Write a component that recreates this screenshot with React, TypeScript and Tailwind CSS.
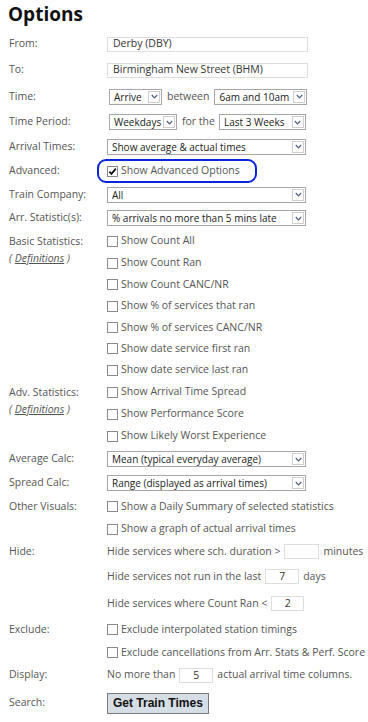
import React from "react";

type RowProps = {
  h: string;
  label?: React.ReactNode;
  children?: React.ReactNode;
};

const Row = ({ h, label, children }: RowProps) => (
  <div className={`flex items-center ${h}`}>
    <div className="w-[107px] shrink-0 pl-[9px] text-[#555]">{label}</div>
    <div className="flex flex-1 items-center">{children}</div>
  </div>
);

const Chevron = () => (
  <svg width="7" height="5" viewBox="0 0 7 5">
    <path d="M0.8 1 L3.5 3.8 L6.2 1" fill="none" stroke="#4d5f7a" strokeWidth="1.2" />
  </svg>
);

const Select = ({ value, w }: { value: string; w: string }) => (
  <div
    className={`relative flex h-[16px] shrink-0 items-center border border-[#a7a7a7] bg-white pl-[4px] text-[10px] text-[#222] ${w}`}
  >
    <span className="whitespace-nowrap leading-none">{value}</span>
    <div className="absolute right-[1px] top-[1px] flex h-[12px] w-[12px] items-center justify-center border border-[#cfcfcf] bg-white">
      <Chevron />
    </div>
  </div>
);

const TextBox = ({ value, w }: { value?: string; w: string }) => (
  <div
    className={`flex h-[15px] shrink-0 items-center justify-center border border-[#dedede] bg-white text-[#333] ${w}`}
  >
    <span className="leading-none">{value}</span>
  </div>
);

const Check = ({ label, checked = false }: { label: string; checked?: boolean }) => (
  <div className="flex items-center">
    <span className="relative mr-[3px] flex h-[11px] w-[11px] shrink-0 items-center justify-center border border-[#8a8a8a] bg-white">
      {checked && (
        <svg width="9" height="9" viewBox="0 0 9 9" className="absolute left-[0px] top-[0px]">
          <path d="M1.3 4.6 L3.5 6.9 L7.8 1.6" fill="none" stroke="#111" strokeWidth="1.7" />
        </svg>
      )}
    </span>
    <span className="whitespace-nowrap text-[#555]">{label}</span>
  </div>
);

const Defs = ({ title }: { title: string }) => (
  <div className="pl-[9px] leading-[17px] text-[#555]">
    <div>{title}</div>
    <div className="italic">
      ( <span className="underline">Definitions</span> )
    </div>
  </div>
);

const App = () => {
  const basic = [
    "Show Count All",
    "Show Count Ran",
    "Show Count CANC/NR",
    "Show % of services that ran",
    "Show % of services CANC/NR",
    "Show date service first ran",
    "Show date service last ran",
  ];
  const basicH = ["h-[22px]", "h-[22px]", "h-[21px]", "h-[22px]", "h-[21px]", "h-[21px]", "h-[22px]"];
  const adv = [
    "Show Arrival Time Spread",
    "Show Performance Score",
    "Show Likely Worst Experience",
  ];

  return (
    <div className="h-[722px] w-[368px] overflow-hidden bg-white font-['Open_Sans',sans-serif] text-[10.5px]">
      <div className="h-[31px] pl-[8px] pt-[2px] text-[19px] font-bold leading-[24px] text-[#111]">
        Options
      </div>

      <Row h="h-[26px]" label="From:">
        <div className="flex h-[15px] w-[201px] items-center border border-[#dedede] bg-white pl-[5px] text-[#333]">
          Derby (DBY)
        </div>
      </Row>
      <Row h="h-[26px]" label="To:">
        <div className="flex h-[15px] w-[201px] items-center border border-[#dedede] bg-white pl-[5px] text-[#333]">
          Birmingham New Street (BHM)
        </div>
      </Row>
      <Row h="h-[27px]" label="Time:">
        <div className="ml-[2px] flex items-center">
          <Select value="Arrive" w="w-[53px]" />
          <span className="mx-[5px] text-[#555]">between</span>
          <Select value="6am and 10am" w="w-[93px]" />
        </div>
      </Row>
      <Row h="h-[24px]" label="Time Period:">
        <div className="ml-[2px] flex items-center">
          <Select value="Weekdays" w="w-[68px]" />
          <span className="ml-[5px] mr-[4px] text-[#555]">for the</span>
          <Select value="Last 3 Weeks" w="w-[87px]" />
        </div>
      </Row>
      <Row h="h-[25px]" label="Arrival Times:">
        <Select value="Show average & actual times" w="w-[199px]" />
      </Row>
      <Row h="h-[24px]" label="Advanced:">
        <div className="-ml-[10px] flex h-[24px] w-[160px] items-center rounded-[9px] border-[2.5px] border-[#0b25dc] pl-[8px]">
          <Check label="Show Advanced Options" checked />
        </div>
      </Row>
      <Row h="h-[23px]" label="Train Company:">
        <Select value="All" w="w-[199px]" />
      </Row>
      <Row h="h-[24px]" label="Arr. Statistic(s):">
        <Select value="% arrivals no more than 5 mins late" w="w-[199px]" />
      </Row>

      <div className="flex">
        <div className="w-[107px] shrink-0 pt-[3px]">
          <Defs title="Basic Statistics:" />
        </div>
        <div className="flex flex-col">
          {basic.map((b, i) => (
            <div key={b} className={`flex items-center ${basicH[i]}`}>
              <Check label={b} />
            </div>
          ))}
        </div>
      </div>

      <div className="flex">
        <div className="w-[107px] shrink-0 pt-[3px]">
          <Defs title="Adv. Statistics:" />
        </div>
        <div className="flex flex-col">
          {adv.map((b) => (
            <div key={b} className="flex h-[22px] items-center">
              <Check label={b} />
            </div>
          ))}
        </div>
      </div>

      <Row h="h-[24px]" label="Average Calc:">
        <Select value="Mean (typical everyday average)" w="w-[199px]" />
      </Row>
      <Row h="h-[24px]" label="Spread Calc:">
        <Select value="Range (displayed as arrival times)" w="w-[199px]" />
      </Row>
      <Row h="h-[23px]" label="Other Visuals:">
        <Check label="Show a Daily Summary of selected statistics" />
      </Row>
      <Row h="h-[22px]">
        <Check label="Show a graph of actual arrival times" />
      </Row>

      <Row h="h-[23px]" label="Hide:">
        <div className="flex items-center whitespace-nowrap text-[#555]">
          <span>Hide services where sch. duration &gt;</span>
          <TextBox w="ml-[4px] w-[35px]" />
          <span className="ml-[4px]">minutes</span>
        </div>
      </Row>
      <Row h="h-[27px]">
        <div className="flex items-center whitespace-nowrap text-[#555]">
          <span>Hide services not run in the last</span>
          <TextBox value="7" w="ml-[4px] w-[34px]" />
          <span className="ml-[4px]">days</span>
        </div>
      </Row>
      <Row h="h-[27px]">
        <div className="flex items-center whitespace-nowrap text-[#555]">
          <span>Hide services where Count Ran &lt;</span>
          <TextBox value="2" w="ml-[4px] w-[33px]" />
        </div>
      </Row>

      <Row h="h-[25px]" label="Exclude:">
        <Check label="Exclude interpolated station timings" />
      </Row>
      <Row h="h-[21px]">
        <Check label="Exclude cancellations from Arr. Stats & Perf. Score" />
      </Row>
      <Row h="h-[24px]" label="Display:">
        <div className="flex items-center whitespace-nowrap text-[#555]">
          <span>No more than</span>
          <TextBox value="5" w="ml-[4px] w-[34px]" />
          <span className="ml-[4px]">actual arrival time columns.</span>
        </div>
      </Row>
      <Row h="h-[32px]" label="Search:">
        <button className="h-[21px] border border-[#7a7a7a] bg-[#d5dde5] px-[5px] font-['Liberation_Sans',Arial,sans-serif] text-[12px] font-bold leading-none text-[#111]">
          Get Train Times
        </button>
      </Row>
    </div>
  );
};

export default App;
